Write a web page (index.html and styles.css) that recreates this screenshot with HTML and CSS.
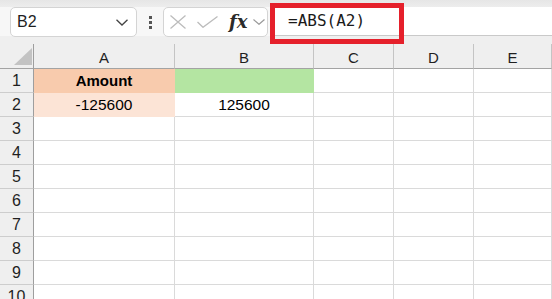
FILE: index.html
```html
<!DOCTYPE html>
<html lang="en">
<head>
    <meta charset="UTF-8">
    <meta name="viewport" content="width=device-width, initial-scale=1.0">
    <title>ABS formula</title>
    <link rel="stylesheet" href="styles.css">
</head>
<body>
    <div class="topstrip"></div>
    <div class="toolbar">
        <div class="namebox">
            <span>B2</span>
            <svg class="chev" width="12" height="7" viewBox="0 0 12 7"><polyline points="0.5,0.8 6,6 11.5,0.8" fill="none" stroke="#444" stroke-width="1.3"/></svg>
        </div>
        <div class="dots"><i></i><i></i><i></i></div>
        <div class="fxbox">
            <svg width="16" height="14" viewBox="0 0 16 14"><path d="M0.5 0.5 L15.5 13.5 M15.5 0.5 L0.5 13.5" stroke="#bcbcbc" stroke-width="1.3" fill="none"/></svg>
            <svg class="check" width="21" height="12" viewBox="0 0 21 12"><polyline points="0.5,6 6,11.3 20.5,0.5" fill="none" stroke="#bcbcbc" stroke-width="1.3"/></svg>
            <span class="fx">fx</span>
            <svg width="12" height="6" viewBox="0 0 12 6"><polyline points="0.5,0.5 6,5.3 11.5,0.5" fill="none" stroke="#9a9a9a" stroke-width="1.2"/></svg>
        </div>
        <div class="formula">=ABS(A2)</div>
        <div class="highlight"></div>
    </div>
    <div class="gap"></div>
    <div class="sheet">
        <div class="corner"><svg width="18" height="18" viewBox="0 0 18 18"><polygon points="18,0 18,17 0,17" fill="#c3c3c3"/></svg></div>
        <div class="colhead">A</div>
        <div class="colhead">B</div>
        <div class="colhead">C</div>
        <div class="colhead">D</div>
        <div class="colhead">E</div>

        <div class="rowhead">1</div>
        <div class="cell bold fill-head">Amount</div>
        <div class="cell fill-green"></div>
        <div class="cell"></div><div class="cell"></div><div class="cell"></div>

        <div class="rowhead">2</div>
        <div class="cell fill-light">-125600</div>
        <div class="cell">125600</div>
        <div class="cell"></div><div class="cell"></div><div class="cell"></div>

        <div class="rowhead">3</div>
        <div class="cell"></div><div class="cell"></div><div class="cell"></div><div class="cell"></div><div class="cell"></div>
        <div class="rowhead">4</div>
        <div class="cell"></div><div class="cell"></div><div class="cell"></div><div class="cell"></div><div class="cell"></div>
        <div class="rowhead">5</div>
        <div class="cell"></div><div class="cell"></div><div class="cell"></div><div class="cell"></div><div class="cell"></div>
        <div class="rowhead">6</div>
        <div class="cell"></div><div class="cell"></div><div class="cell"></div><div class="cell"></div><div class="cell"></div>
        <div class="rowhead">7</div>
        <div class="cell"></div><div class="cell"></div><div class="cell"></div><div class="cell"></div><div class="cell"></div>
        <div class="rowhead">8</div>
        <div class="cell"></div><div class="cell"></div><div class="cell"></div><div class="cell"></div><div class="cell"></div>
        <div class="rowhead">9</div>
        <div class="cell"></div><div class="cell"></div><div class="cell"></div><div class="cell"></div><div class="cell"></div>
        <div class="rowhead">10</div>
        <div class="cell"></div><div class="cell"></div><div class="cell"></div><div class="cell"></div><div class="cell"></div>
    </div>
</body>
</html>
```

FILE: styles.css
```css
body {
    margin: 0;
    width: 552px;
    height: 299px;
    overflow: hidden;
    font-family: "Liberation Sans", Arial, sans-serif;
    background-color: #f7f7f7;
    color: #1f1f1f;
}
.topstrip {
    height: 7px;
    background: linear-gradient(#e6e6e6, #ededed);
}
.toolbar {
    position: relative;
    display: flex;
    height: 29px;
    background-color: #f7f7f7;
}
.namebox {
    box-sizing: border-box;
    width: 127px;
    height: 30px;
    margin-left: 10px;
    display: flex;
    align-items: center;
    justify-content: space-between;
    padding: 0 8px 0 6px;
    background: #fff;
    border: 1px solid #d4d4d4;
    border-radius: 5px;
    font-size: 16px;
}
.namebox .chev {
    margin-top: 1px;
}
.dots {
    width: 26px;
    display: flex;
    flex-direction: column;
    align-items: center;
    justify-content: center;
    gap: 2px;
    padding-top: 1px;
}
.dots i {
    display: block;
    width: 3px;
    height: 3px;
    background: #555;
}
.fxbox {
    box-sizing: border-box;
    width: 105px;
    height: 30px;
    display: flex;
    align-items: center;
    padding-left: 6px;
    background: #fff;
    border: 1px solid #d4d4d4;
    border-radius: 5px;
}
.fxbox .check {
    margin-left: 11px;
}
.fx {
    font-family: "DejaVu Serif", serif;
    font-style: italic;
    font-weight: bold;
    font-size: 18px;
    color: #2a2a2a;
    margin: -2px 6px 0 11px;
}
.formula {
    box-sizing: border-box;
    flex: 1;
    height: 29px;
    margin-left: 3px;
    padding-left: 17px;
    background: #fff;
    border-bottom: 1px solid #c9c9c9;
    border-top-left-radius: 5px;
    font-family: "DejaVu Sans Mono", monospace;
    font-size: 16px;
    line-height: 28px;
    color: #1a1a1a;
}
.highlight {
    position: absolute;
    left: 270px;
    top: -4px;
    width: 134px;
    height: 41px;
    box-sizing: border-box;
    border: 5px solid #e5202b;
}
.gap {
    height: 8px;
    background-color: #efefef;
}
.sheet {
    display: grid;
    grid-template-columns: 34px 141px 139px 80px 80px 1fr;
    grid-template-rows: 25px repeat(10, 24px);
    background: #fff;
}
.sheet > div {
    box-sizing: border-box;
    display: flex;
    align-items: center;
    justify-content: center;
}
.corner {
    background: #efefef;
    border-right: 1px solid #9e9e9e;
    border-bottom: 1px solid #a3a3a3;
    justify-content: flex-end !important;
    align-items: flex-end !important;
    padding: 0 1px 2px 0;
}
.colhead {
    background: #efefef;
    border-right: 1px solid #c4c4c4;
    border-bottom: 1px solid #a3a3a3;
    font-size: 15px;
    padding-top: 2px;
}
.rowhead {
    background: #efefef;
    border-right: 1px solid #9e9e9e;
    border-bottom: 1px solid #cdcdcd;
    font-size: 16px;
}
.cell {
    border-right: 1px solid #dadada;
    border-bottom: 1px solid #dadada;
    font-size: 15.5px;
    color: #000;
}
.bold {
    font-weight: bold;
    font-size: 15px;
}
.fill-head {
    background: #f8cbad;
    border-color: #f8cbad !important;
}
.fill-green {
    background: #b4e5a2;
    border-color: #b4e5a2 !important;
}
.fill-light {
    background: #fce4d6;
    border-color: #fce4d6 !important;
}
```
